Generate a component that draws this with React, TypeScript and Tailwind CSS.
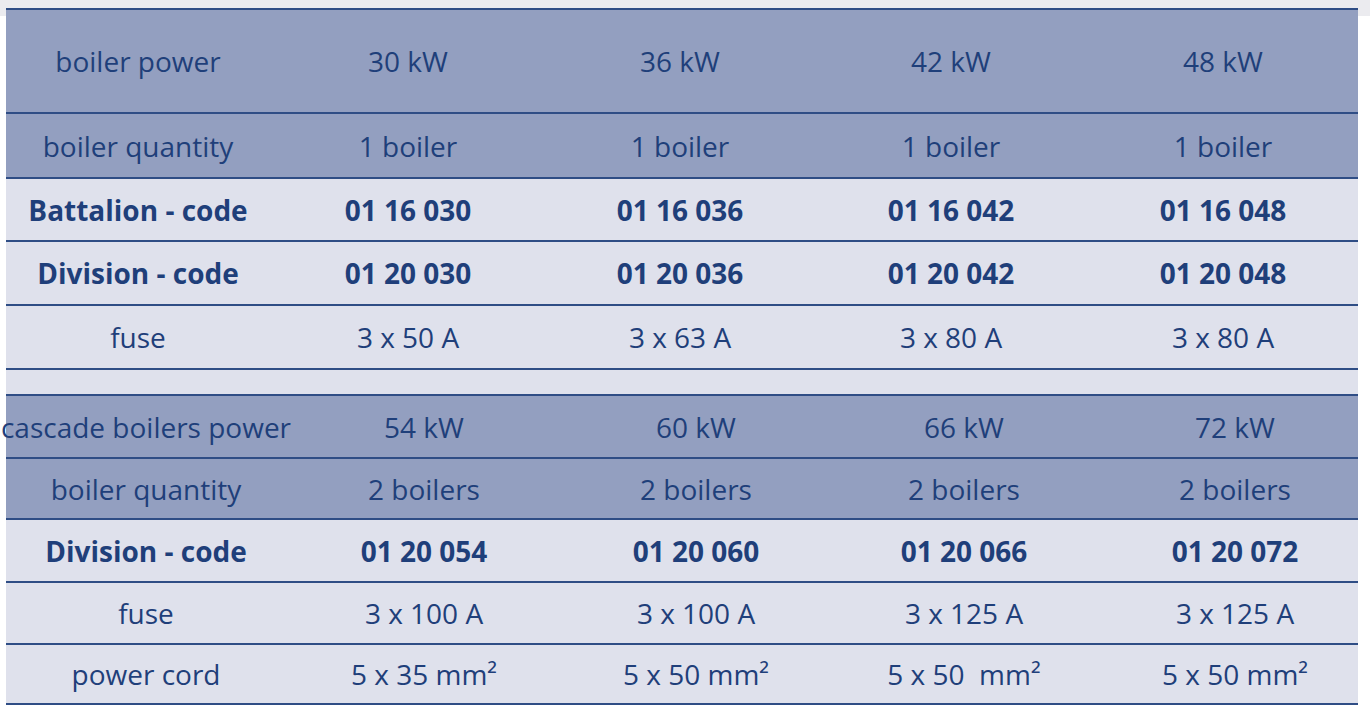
import React from 'react';

type Row = {
  cells: string[];
  dark?: boolean;
  bold?: boolean;
  h: string;
};

const topRows: Row[] = [
  { cells: ['boiler power', '30 kW', '36 kW', '42 kW', '48 kW'], dark: true, h: 'h-[104px]' },
  { cells: ['boiler quantity', '1 boiler', '1 boiler', '1 boiler', '1 boiler'], dark: true, h: 'h-[65px]' },
  { cells: ['Battalion - code', '01 16 030', '01 16 036', '01 16 042', '01 16 048'], bold: true, h: 'h-[63px]' },
  { cells: ['Division - code', '01 20 030', '01 20 036', '01 20 042', '01 20 048'], bold: true, h: 'h-[64px]' },
  { cells: ['fuse', '3 x 50 A', '3 x 63 A', '3 x 80 A', '3 x 80 A'], h: 'h-[64px]' },
];

const bottomRows: Row[] = [
  { cells: ['cascade boilers power', '54 kW', '60 kW', '66 kW', '72 kW'], dark: true, h: 'h-[63px]' },
  { cells: ['boiler quantity', '2 boilers', '2 boilers', '2 boilers', '2 boilers'], dark: true, h: 'h-[61px]' },
  { cells: ['Division - code', '01 20 054', '01 20 060', '01 20 066', '01 20 072'], bold: true, h: 'h-[63px]' },
  { cells: ['fuse', '3 x 100 A', '3 x 100 A', '3 x 125 A', '3 x 125 A'], h: 'h-[62px]' },
  { cells: ['power cord', '5 x 35 mm²', '5 x 50 mm²', '5 x 50  mm²', '5 x 50 mm²'], h: 'h-[62px]' },
];

const SpecRow = ({ row, cols, last }: { row: Row; cols: string; last?: boolean }) => (
  <div
    className={`grid ${cols} ${row.h} border-t-2 border-[#2f4d85] ${last ? 'border-b-2' : ''} ${
      row.dark ? 'bg-[#939fc0]' : 'bg-[#dfe1ec]'
    }`}
  >
    {row.cells.map((c, i) => (
      <div
        key={i}
        className={`flex items-center justify-center whitespace-pre text-[28px] text-[#1f3f7a] ${
          row.bold ? 'font-bold' : 'font-normal'
        } ${i === 4 && cols.includes('260px') ? 'pl-[14px]' : ''}`}
      >
        {c}
      </div>
    ))}
  </div>
);

export default function App() {
  const topCols = 'grid-cols-[264px_276px_268px_274px_270px]';
  const bottomCols = 'grid-cols-[280px_276px_268px_268px_260px]';
  return (
    <div
      className="w-[1370px] h-[715px] overflow-hidden bg-[linear-gradient(#ebebef_16px,#ffffff_16px)] pt-2"
      style={{ fontFamily: '"Open Sans", "Noto Sans", sans-serif' }}
    >
      <div className="ml-[6px] w-[1352px] bg-[#dfe1ec]">
        {topRows.map((r, i) => (
          <SpecRow key={i} row={r} cols={topCols} />
        ))}
        <div className="h-[26px] border-t-2 border-[#2f4d85]" />
        {bottomRows.map((r, i) => (
          <SpecRow key={i} row={r} cols={bottomCols} last={i === bottomRows.length - 1} />
        ))}
      </div>
    </div>
  );
}
